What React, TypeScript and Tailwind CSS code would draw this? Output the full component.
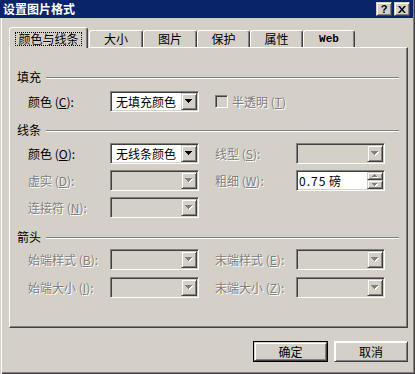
import type { ReactNode } from "react";

const sunken =
  "border border-t-[#808080] border-l-[#808080] border-r-white border-b-white shadow-[inset_1px_1px_0_#404040,inset_-1px_-1px_0_#d4d0c8]";
const raised =
  "border border-t-[#d4d0c8] border-l-[#d4d0c8] border-r-[#404040] border-b-[#404040] shadow-[inset_1px_1px_0_#fff,inset_-1px_-1px_0_#808080] bg-[#d4d0c8]";
const dim = "text-[#808080] [text-shadow:1px_1px_0_#fff]";

function DownArrow({ enabled }: { enabled?: boolean }) {
  const tri = (dx: number, dy: number, fill: string) => (
    <g fill={fill} transform={`translate(${dx} ${dy})`}>
      <rect x="0" y="0" width="7" height="1" />
      <rect x="1" y="1" width="5" height="1" />
      <rect x="2" y="2" width="3" height="1" />
      <rect x="3" y="3" width="1" height="1" />
    </g>
  );
  return (
    <svg width="8" height="5" viewBox="0 0 8 5" aria-hidden="true">
      {enabled ? (
        tri(0, 0, "#000")
      ) : (
        <>
          {tri(1, 1, "#fff")}
          {tri(0, 0, "#808080")}
        </>
      )}
    </svg>
  );
}

function SmallArrow({ up }: { up?: boolean }) {
  const rows = up
    ? [
        [2, 0, 1],
        [1, 1, 3],
        [0, 2, 5],
      ]
    : [
        [0, 0, 5],
        [1, 1, 3],
        [2, 2, 1],
      ];
  return (
    <svg width="6" height="4" viewBox="0 0 6 4" aria-hidden="true">
      {rows.map(([x, y, w]) => (
        <rect key={`w${y}`} x={x + 1} y={y + 1} width={w} height="1" fill="#fff" />
      ))}
      {rows.map(([x, y, w]) => (
        <rect key={`g${y}`} x={x} y={y} width={w} height="1" fill="#808080" />
      ))}
    </svg>
  );
}

function Combo({ value, enabled }: { value?: string; enabled?: boolean }) {
  return (
    <div
      className={`w-[89px] h-[21px] flex p-[1px] ${sunken} ${
        enabled ? "bg-white" : "bg-[#d4d0c8]"
      }`}
    >
      <div className="flex-1 flex items-center pl-[4px] text-black whitespace-nowrap overflow-hidden">
        {value}
      </div>
      <div className={`w-[16px] h-full flex items-center justify-center ${raised}`}>
        <DownArrow enabled={enabled} />
      </div>
    </div>
  );
}

function Spin({ children }: { children: ReactNode }) {
  return (
    <div className={`w-[89px] h-[21px] flex p-[1px] bg-white ${sunken}`}>
      <div className="flex-1 flex items-center pl-[1px] text-black whitespace-nowrap">
        <span>{children}</span>
      </div>
      <div className="w-[16px] h-full flex flex-col">
        <div className={`h-[8px] flex items-center justify-center ${raised}`}>
          <SmallArrow up />
        </div>
        <div className={`flex-1 flex items-center justify-center ${raised}`}>
          <SmallArrow />
        </div>
      </div>
    </div>
  );
}

function Label({
  text,
  hot,
  colon = true,
  disabled,
  width,
}: {
  text: string;
  hot: string;
  colon?: boolean;
  disabled?: boolean;
  width: string;
}) {
  return (
    <div className={`${width} whitespace-nowrap ${disabled ? dim : "text-black"}`}>
      {text} (<u>{hot}</u>){colon ? ":" : ""}
    </div>
  );
}

function Section({ title, className }: { title: string; className: string }) {
  return (
    <div className={`flex items-center h-[14px] pl-[7px] pr-[8px] ${className}`}>
      <span className="text-black">{title}</span>
      <div className="flex-1 ml-[5px] mt-[2px] h-[2px] border-t border-t-[#808080] border-b border-b-white" />
    </div>
  );
}

function Tab({ label, width, mono }: { label: string; width: string; mono?: boolean }) {
  return (
    <div
      className={`${width} h-[17px] flex items-center justify-center rounded-t-[3px] border-l border-t border-l-white border-t-white border-r border-r-[#404040] shadow-[inset_-1px_0_0_#808080] text-black ${
        mono ? "font-['Liberation_Mono',monospace] text-[11px] font-bold" : ""
      }`}
    >
      {label}
    </div>
  );
}

export default function App() {
  return (
    <div className="w-[415px] h-[374px] bg-[#d4d0c8] flex flex-col text-[12px] leading-[14px] font-['Noto_Sans_CJK_SC',sans-serif] shadow-[inset_1px_0_0_#d4d0c8,inset_2px_0_0_#fff,inset_-1px_-1px_0_#404040,inset_-2px_-2px_0_#808080]">
      {/* title bar */}
      <div className="h-[18px] mr-[2px] bg-[#0a246a] flex items-center pl-[3px] pr-[3px]">
        <span className="text-white font-bold">设置图片格式</span>
        <div className="ml-auto flex gap-[2px]">
          <div className={`w-[16px] h-[14px] flex items-center justify-center ${raised}`}>
            <span className="font-['Liberation_Sans',sans-serif] font-bold text-[11px] leading-[11px] text-black">
              ?
            </span>
          </div>
          <div className={`w-[16px] h-[14px] flex items-center justify-center ${raised}`}>
            <svg width="8" height="7" viewBox="0 0 8 7" aria-hidden="true">
              <path d="M0 0h2l2 2.5L6 0h2L5 3.5 8 7H6L4 4.5 2 7H0l3-3.5z" fill="#000" />
            </svg>
          </div>
        </div>
      </div>

      <div className="pl-[9px] pt-[9px]">
        {/* tabs */}
        <div className="flex items-end h-[20px]">
          <div className="relative z-10 w-[79px] h-[21px] -mb-[1px] bg-[#d4d0c8] flex items-start justify-center pt-[4px] rounded-t-[3px] border-l border-t border-l-white border-t-white border-r border-r-[#404040] shadow-[inset_-1px_0_0_#808080]">
            <span className="px-[2px] h-[14px] border border-dotted border-black flex items-center text-black">
              颜色与线条
            </span>
          </div>
          <div className="w-[1px]" />
          <Tab label="大小" width="w-[54px]" />
          <Tab label="图片" width="w-[54px]" />
          <Tab label="保护" width="w-[53px]" />
          <Tab label="属性" width="w-[53px]" />
          <Tab label="Web" width="w-[52px]" mono />
        </div>

        {/* tab panel */}
        <div className="w-[399px] h-[281px] border-l border-t border-l-white border-t-white border-r border-b border-r-[#404040] border-b-[#404040] shadow-[inset_-1px_-1px_0_#808080] flex flex-col">
          <Section title="填充" className="mt-[22px]" />
          <div className="mt-[7px] h-[21px] flex items-center pl-[18px]">
            <Label width="w-[82px]" text="颜色" hot="C" />
            <Combo value="无填充颜色" enabled />
            <div className="ml-[16px] flex items-center">
              <div className={`w-[13px] h-[13px] bg-[#d4d0c8] ${sunken}`} />
              <Label width="ml-[4px]" text="半透明" hot="T" colon={false} disabled />
            </div>
          </div>

          <Section title="线条" className="mt-[11px]" />
          <div className="mt-[6px] h-[21px] flex items-center pl-[18px]">
            <Label width="w-[82px]" text="颜色" hot="O" />
            <Combo value="无线条颜色" enabled />
            <Label width="w-[81px] ml-[16px]" text="线型" hot="S" disabled />
            <Combo />
          </div>
          <div className="mt-[6px] h-[21px] flex items-center pl-[18px]">
            <Label width="w-[82px]" text="虚实" hot="D" disabled />
            <Combo />
            <Label width="w-[81px] ml-[16px]" text="粗细" hot="W" disabled />
            <Spin>
              <span className="tracking-[1px]">0.75</span> 磅
            </Spin>
          </div>
          <div className="mt-[6px] h-[21px] flex items-center pl-[18px]">
            <Label width="w-[82px]" text="连接符" hot="N" disabled />
            <Combo />
          </div>

          <Section title="箭头" className="mt-[12px]" />
          <div className="mt-[5px] h-[21px] flex items-center pl-[18px]">
            <Label width="w-[82px]" text="始端样式" hot="B" disabled />
            <Combo />
            <Label width="w-[81px] ml-[16px]" text="末端样式" hot="E" disabled />
            <Combo />
          </div>
          <div className="mt-[7px] h-[21px] flex items-center pl-[18px]">
            <Label width="w-[82px]" text="始端大小" hot="I" disabled />
            <Combo />
            <Label width="w-[81px] ml-[16px]" text="末端大小" hot="Z" disabled />
            <Combo />
          </div>
        </div>

        {/* buttons */}
        <div className="w-[399px] mt-[13px] flex justify-end gap-[6px]">
          <div className="w-[75px] h-[21px] border border-black">
            <div className={`w-full h-full flex items-center justify-center text-black ${raised}`}>
              确定
            </div>
          </div>
          <div
            className={`w-[74px] h-[21px] flex items-center justify-center text-black ${raised} !border-t-white !border-l-white shadow-[inset_-1px_-1px_0_#808080]`}
          >
            取消
          </div>
        </div>
      </div>
    </div>
  );
}
